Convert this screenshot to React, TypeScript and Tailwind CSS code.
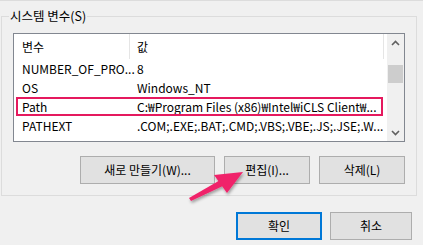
import React from "react";

const rows = [
  { n: "NUMBER_OF_PRO...", v: "8" },
  { n: "OS", v: "Windows_NT" },
  { n: "Path", v: "C:₩Program Files (x86)₩Intel₩iCLS Client₩...", sel: true },
  { n: "PATHEXT", v: ".COM;.EXE;.BAT;.CMD;.VBS;.VBE;.JS;.JSE;.W..." },
];

function Btn({ children, w, primary }: { children: React.ReactNode; w: string; primary?: boolean }) {
  return (
    <div
      className={`${w} h-[28px] flex items-center justify-center bg-[#e1e1e1] ${
        primary ? "border-2 border-[#0078d7]" : "border border-[#adadad]"
      } text-[12px] text-black`}
    >
      {children}
    </div>
  );
}

export default function App() {
  return (
    <div
      className="relative w-[423px] h-[245px] overflow-hidden bg-[#f0f0f0] text-black"
      style={{ fontFamily: '"Noto Sans CJK KR", "Noto Sans", sans-serif' }}
    >
      <div className="h-[16px] border-t border-[#dcdcdc]" />
      {/* group box */}
      <div className="relative ml-[1px] w-[416px] h-[180px] border border-[#dcdcdc] pl-[11px] pt-[16px]">
        <div className="absolute left-[7px] top-[-9px] px-[1px] bg-[#f0f0f0] text-[12.5px] leading-[16px]">
          시스템 변수(S)
        </div>
        {/* list view */}
        <div className="relative w-[392px] h-[109px] border border-[#828790] bg-white flex">
          <div className="flex-1 flex flex-col">
            <div className="h-[25px] flex items-center text-[12px] shrink-0">
              <div className="w-[116px] pl-[8px] h-full flex items-center border-r border-[#e5e5e5]">변수</div>
              <div className="w-[254px] pl-[7px] h-full flex items-center border-r border-[#e5e5e5]">값</div>
            </div>
            {rows.map((r) => (
              <div key={r.n} className="relative h-[19px] flex items-center text-[12px] whitespace-nowrap">
                {r.sel && (
                  <div className="absolute left-[2px] top-[0px] w-[367px] h-[19px] border-2 border-[#e5195e]" />
                )}
                <div className="w-[117px] pl-[8px]">{r.n}</div>
                <div className="pl-[6px]">{r.v}</div>
              </div>
            ))}
          </div>
          {/* scrollbar */}
          <div className="w-[17px] h-full bg-[#f0f0f0] flex flex-col items-center">
            <div className="h-[17px] w-full flex items-center justify-center">
              <svg width="9" height="6" viewBox="0 0 9 6">
                <path d="M1 5 L4.5 1.5 L8 5" fill="none" stroke="#606060" strokeWidth="1.6" />
              </svg>
            </div>
            <div className="mt-[14px] w-[15px] h-[18px] bg-[#cdcdcd]" />
            <div className="flex-1" />
            <div className="h-[17px] w-full flex items-center justify-center">
              <svg width="9" height="6" viewBox="0 0 9 6">
                <path d="M1 1 L4.5 4.5 L8 1" fill="none" stroke="#606060" strokeWidth="1.6" />
              </svg>
            </div>
          </div>
        </div>
        {/* buttons */}
        <div className="mt-[14px] flex gap-[9px] pl-[67px]">
          <Btn w="w-[135px]">새로 만들기(W)...</Btn>
          <Btn w="w-[86px]">편집(I)...</Btn>
          <Btn w="w-[86px]">삭제(L)</Btn>
        </div>
      </div>
      {/* dialog buttons */}
      <div className="mt-[16px] flex gap-[8px] pl-[236px]">
        <Btn w="w-[86px]" primary>확인</Btn>
        <Btn w="w-[82px]">취소</Btn>
      </div>
      {/* annotation arrow */}
      <svg className="absolute left-0 top-0 pointer-events-none" width="423" height="245">
        <defs>
          <filter id="sh" x="-20%" y="-20%" width="140%" height="140%">
            <feDropShadow dx="1" dy="2" stdDeviation="1.5" floodColor="#000" floodOpacity="0.35" />
          </filter>
        </defs>
        <g filter="url(#sh)">
          <polygon points="189,198 222,179 225,185 191,201" fill="#f0246a" />
          <polygon points="243,172 214,175 227,193" fill="#f0246a" />
        </g>
      </svg>
    </div>
  );
}
